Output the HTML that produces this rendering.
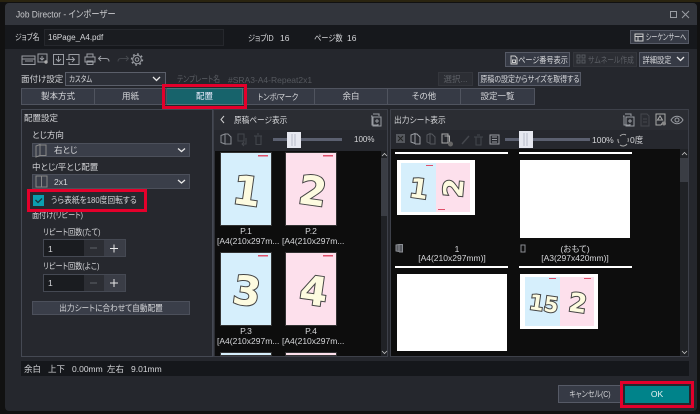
<!DOCTYPE html>
<html><head><meta charset="utf-8">
<style>
html,body{margin:0;padding:0;background:#111;width:700px;height:414px;overflow:hidden}
body{position:relative;font-family:"Liberation Sans","Noto Sans CJK JP",sans-serif;font-size:8.5px;color:#d6d7da;font-feature-settings:"palt"}
.b{position:absolute;box-sizing:border-box}
.t{position:absolute;transform:translateY(-50%) scaleX(var(--x,1));transform-origin:left center;white-space:nowrap;line-height:1;font-style:normal}
.c{transform:translate(-50%,-50%) scaleX(var(--x,1));transform-origin:center}
.tab{position:absolute;top:88px;height:17px;box-sizing:border-box;background:#363a45;border:1px solid #50545f;border-left:none;text-align:center;line-height:15px;color:#d6d7da;white-space:nowrap}
.sel{position:absolute;box-sizing:border-box;background:#3a3e49;border:1px solid #4c505b}
.btn{position:absolute;box-sizing:border-box;background:#363a45;border:1px solid #565a66}
.off{background:#2c2e34;border-color:#34363c}
.pg{position:absolute;box-sizing:border-box;border:1px solid #333}
svg{position:absolute;left:0;top:0}
.d{font-family:"DejaVu Sans",sans-serif;font-weight:bold;fill:#fdfbe0;stroke:#444;stroke-width:2;paint-order:stroke;text-anchor:middle}
.r{position:absolute;box-sizing:border-box;border:3px solid #e4002b}
</style></head><body>
<div class="b" style="left:0;top:0;width:700px;height:2px;background:#2a2410"></div>
<div class="b" style="left:5px;top:3px;width:692px;height:408px;background:#25272d;border-radius:4px"></div>
<div class="b" style="left:5px;top:3px;width:692px;height:22px;background:#32353c;border-radius:4px 4px 0 0"></div>
<div class="b" style="left:5px;top:25px;width:692px;height:24px;background:#16181c"></div>
<i class="t" style="left:16px;top:14.5px;font-size:9.5px;color:#c8c9cc;--x:.88">Job Director - インポーザー</i>
<div class="b" style="left:670px;top:11px;width:7px;height:7px;border:1px solid #9a9da3"></div>

<i class="t" style="left:15px;top:37px;--x:.8">ジョブ名</i>
<div class="b" style="left:44px;top:29px;width:180px;height:17px;background:#1a1c20;border:1px solid #26282d"></div>
<i class="t" style="left:48px;top:37.5px;font-size:8px">16Page_A4.pdf</i>
<i class="t" style="left:248px;top:37.5px;--x:.84">ジョブID</i><i class="t" style="left:280px;top:37.5px">16</i>
<i class="t" style="left:314px;top:37.5px;--x:.85">ページ数</i><i class="t" style="left:347px;top:37.5px">16</i>
<div class="btn" style="left:630px;top:30px;width:59px;height:14px"></div>
<i class="t c" style="left:665.500px;top:37px;--x:.72">シーケンサーへ</i>

<div class="btn" style="left:505px;top:52px;width:65px;height:15px"></div>
<i class="t c" style="left:543px;top:59.500px;--x:.84">ページ番号表示</i>
<div class="btn off" style="left:573px;top:52px;width:64px;height:15px"></div>
<i class="t c" style="left:610.500px;top:59.500px;--x:.8;color:#5d6066">サムネール作成</i>
<div class="btn" style="left:639px;top:52px;width:50px;height:15px"></div>
<i class="t c" style="left:657px;top:59.500px;--x:.85">詳細設定</i>

<i class="t" style="left:21px;top:79px">面付け設定</i>
<div class="sel" style="left:65px;top:72px;width:101px;height:14px;background:#2d3038;border-color:#5b5f6a"></div>
<i class="t" style="left:69px;top:79px;--x:.75">カスタム</i>
<i class="t" style="left:177px;top:79px;color:#5c5f65;--x:.8">テンプレート名</i>
<i class="t" style="left:228px;top:79.5px;color:#55585e">#SRA3-A4-Repeat2x1</i>
<div class="btn off" style="left:438px;top:72px;width:35px;height:14px"></div>
<i class="t c" style="left:455.500px;top:79px;color:#5d6066">選択...</i>
<div class="btn" style="left:478px;top:72px;width:103px;height:14px"></div>
<i class="t c" style="left:529.500px;top:79px;--x:.82">原稿の設定からサイズを取得する</i>

<div class="tab" style="left:21px;width:74px;border-left:1px solid #50545f">製本方式</div>
<div class="tab" style="left:95px;width:72px">用紙</div>
<div class="tab" style="left:167px;width:76px;background:#17636b;border-color:#50757a;color:#eef">配置</div>
<div class="tab" style="left:243px;width:72px"></div>
<i class="t c" style="left:278px;top:96.500px;--x:.84">トンボ/マーク</i>
<div class="tab" style="left:315px;width:73px">余白</div>
<div class="tab" style="left:388px;width:73px">その他</div>
<div class="tab" style="left:461px;width:74px">設定一覧</div>

<!-- left panel -->
<div class="b" style="left:21px;top:109px;width:192px;height:248px;background:#26282e;border:1px solid #454953"></div>
<i class="t" style="left:24px;top:117.5px">配置設定</i>
<i class="t" style="left:32px;top:135px">とじ方向</i>
<div class="sel" style="left:32px;top:143px;width:158px;height:14px"></div>
<i class="t" style="left:54px;top:150px">右とじ</i>
<i class="t" style="left:32px;top:167px">中とじ/平とじ配置</i>
<div class="sel" style="left:32px;top:174px;width:158px;height:15px"></div>
<i class="t" style="left:54px;top:181.5px">2x1</i>
<div class="b" style="left:33px;top:195px;width:11px;height:11px;background:#0a9fb0"></div>
<i class="t" style="left:51px;top:200px;--x:.91">うら表紙を180度回転する</i>
<i class="t" style="left:32px;top:215px;--x:.84">面付け(リピート)</i>
<i class="t" style="left:43px;top:232px;--x:.84">リピート回数(たて)</i>
<div class="b" style="left:43px;top:239px;width:83px;height:18px;background:#1a1c20;border:1px solid #454953"></div>
<div class="b" style="left:84px;top:240px;width:20px;height:16px;background:#2c2e34"></div>
<div class="b" style="left:104px;top:240px;width:21px;height:16px;background:#3a3d46"></div>
<i class="t" style="left:48px;top:248.5px">1</i>
<i class="t" style="left:43px;top:266px;--x:.84">リピート回数(よこ)</i>
<div class="b" style="left:43px;top:274px;width:83px;height:18px;background:#1a1c20;border:1px solid #454953"></div>
<div class="b" style="left:84px;top:275px;width:20px;height:16px;background:#2c2e34"></div>
<div class="b" style="left:104px;top:275px;width:21px;height:16px;background:#3a3d46"></div>
<i class="t" style="left:48px;top:283px">1</i>
<div class="btn" style="left:32px;top:301px;width:158px;height:14px;background:#3a3e49;border-color:#4c505b"></div>
<i class="t c" style="left:111px;top:308px;--x:.9">出力シートに合わせて自動配置</i>

<!-- middle panel -->
<div class="b" style="left:213px;top:109px;width:175px;height:248px;background:#2b2d33;border:1px solid #3d4049"></div>
<div class="b" style="left:214px;top:130px;width:173px;height:21px;background:#26282e"></div>
<i class="t" style="left:234px;top:119.5px;--x:.9">原稿ページ表示</i>
<i class="t" style="left:354px;top:139.5px;font-size:8px">100%</i>
<div class="b" style="left:215px;top:151px;width:172px;height:205px;background:#0d0d0d"></div>
<div class="b" style="left:381px;top:151px;width:6px;height:205px;background:#202226"></div>
<div class="b" style="left:381px;top:158px;width:6px;height:58px;background:#3a3d44"></div>
<div class="b" style="left:273px;top:138px;width:69px;height:3px;background:#5b6070"></div>
<div class="b" style="left:287px;top:132px;width:14px;height:16px;background:#e6e8f0"></div>

<div class="pg" style="left:220px;top:152px;width:52px;height:74px;background:#d6effc"></div>
<div class="pg" style="left:285px;top:152px;width:52px;height:74px;background:#fde0ec"></div>
<div class="pg" style="left:220px;top:252px;width:52px;height:74px;background:#d6effc"></div>
<div class="pg" style="left:285px;top:252px;width:52px;height:74px;background:#fde0ec"></div>
<div class="pg" style="left:220px;top:352px;width:52px;height:4px;background:#d6effc"></div>
<div class="pg" style="left:285px;top:352px;width:52px;height:4px;background:#fde0ec"></div>
<i class="t c" style="left:246px;top:230.5px">P.1</i><i class="t c" style="left:311px;top:230.5px">P.2</i>
<i class="t" style="left:217px;top:240.5px">[A4(210x297m...</i><i class="t" style="left:282px;top:240.5px">[A4(210x297m...</i>
<i class="t c" style="left:246px;top:330.5px">P.3</i><i class="t c" style="left:311px;top:330.5px">P.4</i>
<i class="t" style="left:217px;top:340.5px">[A4(210x297m...</i><i class="t" style="left:282px;top:340.5px">[A4(210x297m...</i>

<!-- right panel -->
<div class="b" style="left:390px;top:109px;width:299px;height:248px;background:#2b2d33;border:1px solid #3d4049"></div>
<div class="b" style="left:391px;top:130px;width:297px;height:19px;background:#26282e"></div>
<i class="t" style="left:394px;top:119.5px;--x:.91">出力シート表示</i>
<div class="b" style="left:505px;top:138px;width:85px;height:3px;background:#5b6070"></div>
<div class="b" style="left:519px;top:131px;width:14px;height:17px;background:#e6e8f0"></div>
<i class="t" style="left:592px;top:140px">100%</i>
<i class="t" style="left:630px;top:140px">0度</i>
<div class="b" style="left:391px;top:149px;width:297px;height:207px;background:#0d0d0d"></div>
<div class="b" style="left:680px;top:149px;width:8px;height:207px;background:#202226"></div>
<div class="b" style="left:680px;top:158px;width:8px;height:24px;background:#3a3d44"></div>
<div class="b" style="left:395px;top:152px;width:113px;height:2px;background:#fff"></div>
<div class="b" style="left:519px;top:152px;width:113px;height:2px;background:#fff"></div>
<div class="b" style="left:395px;top:266px;width:113px;height:2px;background:#fff"></div>
<div class="b" style="left:519px;top:266px;width:113px;height:2px;background:#fff"></div>
<div class="b" style="left:397px;top:160px;width:78px;height:55px;background:#fff"></div>
<div class="b" style="left:401px;top:163px;width:35px;height:49px;background:#d6effc"></div>
<div class="b" style="left:436px;top:163px;width:34px;height:49px;background:#fde0ec"></div>
<div class="b" style="left:520px;top:160px;width:110px;height:78px;background:#fff"></div>
<div class="b" style="left:397px;top:274px;width:110px;height:77px;background:#fff"></div>
<div class="b" style="left:520px;top:274px;width:78px;height:55px;background:#fff"></div>
<div class="b" style="left:525px;top:277px;width:35px;height:49px;background:#d6effc"></div>
<div class="b" style="left:560px;top:277px;width:34px;height:49px;background:#fde0ec"></div>
<i class="t c" style="left:457px;top:248.5px">1</i>
<i class="t c" style="left:452px;top:258px">[A4(210x297mm)]</i>
<i class="t c" style="left:575px;top:248.5px">(おもて)</i>
<i class="t c" style="left:575px;top:258px">[A3(297x420mm)]</i>

<!-- status -->
<div class="b" style="left:21px;top:361px;width:668px;height:15px;background:#15171b"></div>
<i class="t" style="left:24px;top:369px">余白</i><i class="t" style="left:48px;top:369px">上下</i>
<i class="t" style="left:72px;top:369px">0.00mm</i><i class="t" style="left:107px;top:369px">左右</i>
<i class="t" style="left:131px;top:369px">9.01mm</i>

<div class="btn" style="left:558px;top:385px;width:64px;height:18px"></div>
<i class="t c" style="left:590px;top:394px;--x:.82">キャンセル(C)</i>
<div class="b" style="left:625px;top:386px;width:64px;height:17px;background:#00838a;text-align:center;line-height:17px;color:#e8f4f4">OK</div>

<!-- digits + icons -->
<svg width="700" height="414" viewBox="0 0 700 414" fill="none">
<g class="d">
<text x="247" y="205" font-size="40" transform="rotate(8 247 190)">1</text>
<text x="313" y="205" font-size="40" transform="rotate(8 313 190)">2</text>
<text x="247" y="305" font-size="40" transform="rotate(8 247 290)">3</text>
<text x="314" y="305" font-size="40" transform="rotate(8 314 290)">4</text>
<text x="419" y="198" font-size="27" transform="rotate(8 419 188)">1</text>
<text x="453" y="198" font-size="27" transform="rotate(-85 453 188)">2</text>
<text x="544" y="311" font-size="21" transform="rotate(8 544 303)">15</text>
<text x="578" y="312" font-size="26" transform="rotate(8 578 303)">2</text>
</g>
<g fill="#e0506a">
<rect x="258" y="155" width="10" height="1.5"/><rect x="323" y="155" width="10" height="1.5"/>
<rect x="258" y="255" width="10" height="1.5"/><rect x="323" y="255" width="10" height="1.5"/>
<rect x="426" y="165" width="7" height="1"/><rect x="438" y="209" width="7" height="1"/>
<rect x="549" y="278" width="7" height="1"/><rect x="584" y="278" width="7" height="1"/>
</g>
<g stroke="#9a9da3" stroke-width="1">
<!-- window -->
<path d="M682 11l7 7M689 11l-7 7"/>
<!-- top toolbar -->
<path d="M22 56h13v8.500h-13zM22 59h13M25 61h8"/>
<path d="M38 54h9v8h-9zM42 56v4M40 58l2 2 2-2"/>
<circle cx="46" cy="62" r="1.700" fill="#aaa" stroke="none"/>
<path d="M53.500 54.500h10v10h-10zM58.500 56v5M56 59l2.500 2.500L61 59"/>
<path d="M69 59v-4.500h10v10H69V62M66 59.500h8M72 57l2.500 2.500L72 62"/>
<path d="M87 57v-3h6v3M85 57h10v5h-10zM87 61h6v3.500h-6z"/>
<path d="M101 56l-2.500 2.500 2.500 2.500M99 58.500h7c2 0 3 1 3 3"/>
<path d="M126 56l2.500 2.500-2.500 2.500M128 58.500h-7c-2 0-3 1-3 3" stroke="#44474d"/>
<circle cx="137" cy="59.500" r="4.300"/><circle cx="137" cy="59.500" r="1.800"/><circle cx="137" cy="59.500" r="5.500" stroke-dasharray="1.800 2.500" stroke-width="1.400"/>
<!-- right top buttons -->
<path d="M635 34h8v7h-8zM635 36.500h8M638 36.500v4.500" stroke="#ccc"/>
<path d="M511 56h4l2 2v6h-6zM512.500 60h3v2.500h-3z" stroke="#ccc"/>
<path d="M577 55h3v3h-3zM582 55h3v3h-3zM577 60h3v3h-3zM582 60h3v3h-3z" stroke="#55585e"/>
<path d="M677 57l3.500 3.500L684 57" stroke="#e8e8e8" stroke-width="1.300"/>
<path d="M153 77l3.500 3.500L160 77" stroke="#e8e8e8" stroke-width="1.300"/>
<!-- selects -->
<path d="M178 148.500l3.500 3 3.500-3M178 180l3.500 3 3.500-3" stroke="#e8e8e8" stroke-width="1.300"/>
<path d="M36 146l4 -1.500v11l-4 1.500zM40 145h6v10.500h-6" stroke="#888"/>
<path d="M36 176h11v11H36zM41.500 176v11" stroke="#888"/>
<!-- check -->
<path d="M35.500 200l2.500 2.500 4-4" stroke="#16363c" stroke-width="1.300"/>
<!-- spin -->
<path d="M90 248h7M90 283h7" stroke="#5e6168"/>
<path d="M110 248.500h8M114 244.500v8M110 283h8M114 279v8" stroke="#e8e8e8"/>
<!-- middle header -->
<path d="M224 116l-3 3.500 3 3.500" stroke="#d0d0d0"/>
<path d="M373 114h6v2M371 116h1v9h6v-1M373 117h8v9h-8zM375 121h4M377 119v4" stroke="#9a9da3"/>
<path d="M221 135.500l4-1.500v10l-4-1.500zM225 134h3l3 3v7h-6" stroke="#8b8e94"/>
<path d="M238 134h6v7h-6zM242 144h4v-6M244 146l-2-2 2-2" stroke="#44474d"/>
<path d="M254 136h8M256 136v8.500h5V136M257 134h2" stroke="#44474d"/>
<path d="M382 156l2.500-2.500 2.500 2.500" stroke="#c0c0c0" stroke-width=".8"/>
<path d="M382 351l2.500 2.500 2.500-2.500" stroke="#c0c0c0" stroke-width=".8"/>
<path d="M292 134v12M295 134v12" stroke="#b5bac8"/>
<!-- right header -->
<path d="M625 114h6v2M623 116h1v9h6v-1M626 117h8v9h-8zM628 121h4M630 119v4"/>
<path d="M641 114h6l2 2v10h-8zM643 119h4M643 122h4" stroke="#44474d"/>
<path d="M656 114h9v8h-2l-2 3h-5zM660 116l-2.500 4h5z" stroke="#aaa"/>
<circle cx="664" cy="123.500" r="2" fill="#888" stroke="none"/>
<path d="M671 120c3-5 9-5 12 0-3 5-9 5-12 0z"/><circle cx="677" cy="120" r="2"/>
<rect x="396" y="134" width="9" height="9" fill="#55585e" stroke="none"/>
<path d="M398 136l5 5M398 141l5-5" stroke="#222"/>
<path d="M411 135l4-1.500v10l-4-1.500zM415 134h2l3 3v7h-5" stroke="#9a9da3"/>
<path d="M427 135l3-1.500v10l-3-1.500zM430 134h2l3 3v7h-5" stroke="#55585e"/>
<path d="M442 134h6v9h-6zM444.500 136h5v9" stroke="#aaa"/>
<circle cx="450.500" cy="144" r="2.500" fill="#666" stroke="none"/>
<path d="M462 144l7-8" stroke="#44474d" stroke-width="1.500"/>
<path d="M474 137h9M476 137v8h5v-8M477 135h3" stroke="#44474d"/>
<path d="M490 135h9v9h-9zM492 137h5M492 139.500h5M492 142h5" stroke="#9a9da3"/>
<path d="M524 133v13M527 133v13" stroke="#b5bac8"/>
<path d="M620 136a5 5 0 0 1 6-1M627 144a5 5 0 0 1-7 1M618 139a5.500 5.500 0 0 0 1 4M628 138a5.500 5.500 0 0 1 0 4" stroke="#aaa"/>
<path d="M682 155l2.500-2.500 2.500 2.500M682 351l2.500 2.500 2.500-2.500" stroke="#c0c0c0" stroke-width=".8"/>
<path d="M396 245l3-.5v7l-3-.5zM399 244.500h3.500v7.500H399" stroke="#8a8d93" fill="#55585e"/>
<path d="M521 245h4v7h-4z" stroke="#8a8d93"/>
</g>
</svg>

<!-- red highlights -->
<div class="r" style="left:162px;top:84px;width:85px;height:25px"></div>
<div class="r" style="left:27px;top:189px;width:120px;height:23px"></div>
<div class="r" style="left:620px;top:381px;width:74px;height:27px"></div>
</body></html>
